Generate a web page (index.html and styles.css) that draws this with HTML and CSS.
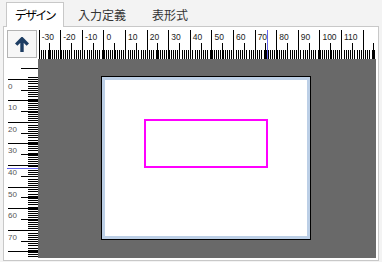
FILE: index.html
```html
<!DOCTYPE html>
<html lang="ja">
<head>
  <meta charset="UTF-8">
  <title>デザイン</title>
  <link rel="stylesheet" href="styles.css">
</head>
<body>

  <div class="tabs">
    <div class="tab active">デザイン</div>
    <div class="tab">入力定義</div>
    <div class="tab">表形式</div>
  </div>

  <div class="panel">
    <div class="corner">
      <button class="up">
        <svg width="14" height="15" viewBox="0 0 14 15">
          <path d="M1.2 7.6 L7 1.8 L12.8 7.6 M7 2.5 V15" fill="none" stroke="#1d3d63" stroke-width="3.4"/>
        </svg>
      </button>
    </div>

    <div class="hruler">
      <span class="tick">-30</span>
      <span class="tick">-20</span>
      <span class="tick">-10</span>
      <span class="tick">0</span>
      <span class="tick">10</span>
      <span class="tick">20</span>
      <span class="tick">30</span>
      <span class="tick">40</span>
      <span class="tick">50</span>
      <span class="tick">60</span>
      <span class="tick">70</span>
      <span class="tick">80</span>
      <span class="tick">90</span>
      <span class="tick">100</span>
      <span class="tick">110</span>
      <span class="tick"></span>
      <i class="hmark"></i>
    </div>

    <div class="vruler">
      <span class="vtick first"></span>
      <span class="vtick">0</span>
      <span class="vtick">10</span>
      <span class="vtick">20</span>
      <span class="vtick">30</span>
      <span class="vtick">40</span>
      <span class="vtick">50</span>
      <span class="vtick">60</span>
      <span class="vtick">70</span>
      <span class="vtick"></span>
      <i class="vmark"></i>
    </div>

    <div class="canvas">
      <div class="page">
        <div class="shape"></div>
      </div>
    </div>
  </div>

</body>
</html>
```

FILE: styles.css
```css
body {
  margin: 0;
  background-color: #f3f3f3;
  font-family: "Noto Sans CJK JP", sans-serif;
}
.tabs {
  display: flex;
  align-items: flex-end;
  height: 26px;
  padding-left: 6px;
}
.tab {
  height: 22px;
  line-height: 22px;
  padding: 0 12px;
  margin-left: 2px;
  font-size: 12px;
  color: #333;
  white-space: nowrap;
}
.tab.active {
  position: relative;
  width: 56px;
  height: 24px;
  line-height: 24px;
  padding: 0;
  margin: 0 0 -1px 0;
  border: 1px solid #c8c8c8;
  border-bottom: none;
  background-color: #fff;
  color: #000;
  text-align: center;
  letter-spacing: -1px;
  font-feature-settings: "palt";
}
.panel {
  display: grid;
  grid-template-columns: 31px 338px;
  grid-template-rows: 29px 199px;
  margin: 0 3px;
  padding: 3px 2px 2px 3px;
  border: 1px solid #c8c8c8;
  background-color: #fff;
}
.up {
  display: flex;
  align-items: center;
  justify-content: center;
  width: 30px;
  height: 28px;
  padding: 0;
  border: 1px solid #b4b4b4;
  background-color: #f7f7f7;
}
.hruler {
  position: relative;
  display: flex;
  overflow: hidden;
  padding-left: 0.7px;
  background: repeating-linear-gradient(to right, #000 0, #000 1px, #fff 1px, #fff 2.16px) 0.7px 100% / 100% 9px no-repeat;
}
.tick {
  position: relative;
  flex: none;
  box-sizing: border-box;
  width: 21.6px;
  padding: 3px 0 0 2px;
  border-left: 1px solid #000;
  font-family: "Liberation Sans", sans-serif;
  font-size: 8.5px;
  line-height: 9px;
  color: #222;
}
.tick::after {
  content: "";
  position: absolute;
  left: 9.8px;
  top: 13px;
  bottom: 0;
  width: 1px;
  background-color: #000;
}
.hmark {
  position: absolute;
  left: 229px;
  top: 0;
  bottom: 0;
  width: 1px;
  background-color: #6464f0;
}
.vruler {
  position: relative;
  display: flex;
  flex-direction: column;
  overflow: hidden;
  background: repeating-linear-gradient(to bottom, #000 0, #000 1px, #fff 1px, #fff 2.16px) 100% 17.8px / 10px 100% no-repeat;
}
.vtick {
  position: relative;
  flex: none;
  box-sizing: border-box;
  height: 21.6px;
  margin-left: 1px;
  padding: 3px 0 0 0;
  border-top: 1px solid #000;
  font-family: "Liberation Sans", sans-serif;
  font-size: 8px;
  line-height: 8px;
  color: #555;
}
.vtick.first {
  margin-top: -1.9px;
}
.vtick::after {
  content: "";
  position: absolute;
  top: 9.8px;
  left: 13px;
  right: 0;
  height: 1px;
  background-color: #000;
}
.vmark {
  position: absolute;
  left: 0;
  right: 0;
  top: 109px;
  height: 1px;
  background-color: #6464f0;
}
.canvas {
  padding: 17px 0 0 63px;
  background-color: #696969;
  overflow: hidden;
}
.page {
  box-sizing: border-box;
  width: 210px;
  height: 164px;
  padding: 42px 0 0 42px;
  border: 1px solid #000;
  background-color: #fff;
  box-shadow: inset 0 0 0 3px #bccfe6;
}
.shape {
  box-sizing: border-box;
  width: 124px;
  height: 49px;
  border: 2px solid #ff00ff;
}
```
